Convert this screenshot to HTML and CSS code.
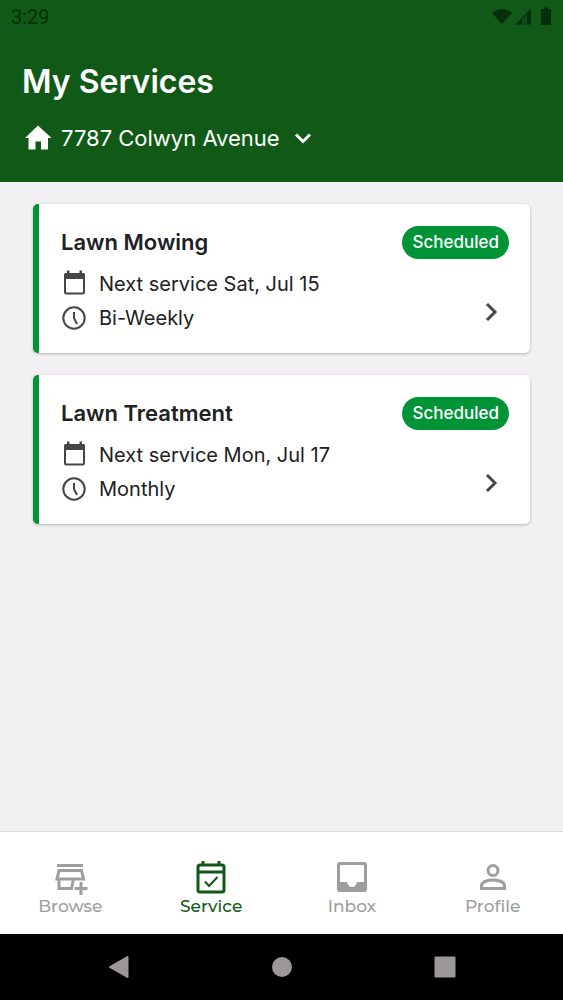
FILE: index.html
```html
<!DOCTYPE html>
<html lang="en">
<head>
<meta charset="utf-8">
<meta name="viewport" content="width=device-width, initial-scale=1">
<title>My Services</title>
<link rel="stylesheet" href="styles.css">
</head>
<body>
<div class="app">
  <header class="header">
    <div class="status">
      <time class="clock">3:29</time>
      <svg class="status-icons" viewBox="0 0 64 24" aria-hidden="true">
        <path d="M3 8Q13 0 23 8L13 19Z"/>
        <path d="M26 19.500L42 3.500V19.500H38V9L33 14V19.500Z"/>
        <path d="M38 9V19.500H33V14Z" opacity=".35"/>
        <path d="M52 4H55V2.500H59V4H62V20H52Z"/>
      </svg>
    </div>
    <h1 class="title">My Services</h1>
    <button class="address" type="button">
      <svg class="home" viewBox="0 0 28 28" aria-hidden="true"><path d="M14 1.500L27.500 14H24V25.500H17V17.500H11.500V25.500H4.500V14H1Z"/></svg>
      <span>7787 Colwyn Avenue</span>
      <svg class="caret" viewBox="0 0 20 20" aria-hidden="true"><path d="M3 6.500L10 13.500L17 6.500"/></svg>
    </button>
  </header>

  <main class="services">
    <article class="card">
      <div class="card-head">
        <h2 class="card-title">Lawn Mowing</h2>
        <span class="badge">Scheduled</span>
      </div>
      <div class="card-body">
        <ul class="details">
          <li class="detail">
            <svg class="detail-icon" viewBox="0 0 28 28" aria-hidden="true"><rect x="5" y="4" width="19" height="19.500" rx="1.500" class="line"/><path d="M4 9V5Q4 3 6 3H7V0.500H9.500V3H19.500V0.500H22V3H23Q25 3 25 5V9Z" class="solid"/></svg>
            <span>Next service Sat, Jul 15</span>
          </li>
          <li class="detail">
            <svg class="detail-icon" viewBox="0 0 28 28" aria-hidden="true"><circle cx="14" cy="14" r="10.700" class="line"/><path d="M14 8V14L17 20" class="line"/></svg>
            <span>Bi-Weekly</span>
          </li>
        </ul>
        <button class="open" type="button" aria-label="Open Lawn Mowing">
          <svg class="chevron" viewBox="0 0 24 24" aria-hidden="true"><path d="M8 4L16 12L8 20"/></svg>
        </button>
      </div>
    </article>

    <article class="card">
      <div class="card-head">
        <h2 class="card-title">Lawn Treatment</h2>
        <span class="badge">Scheduled</span>
      </div>
      <div class="card-body">
        <ul class="details">
          <li class="detail">
            <svg class="detail-icon" viewBox="0 0 28 28" aria-hidden="true"><rect x="5" y="4" width="19" height="19.500" rx="1.500" class="line"/><path d="M4 9V5Q4 3 6 3H7V0.500H9.500V3H19.500V0.500H22V3H23Q25 3 25 5V9Z" class="solid"/></svg>
            <span>Next service Mon, Jul 17</span>
          </li>
          <li class="detail">
            <svg class="detail-icon" viewBox="0 0 28 28" aria-hidden="true"><circle cx="14" cy="14" r="10.700" class="line"/><path d="M14 8V14L17 20" class="line"/></svg>
            <span>Monthly</span>
          </li>
        </ul>
        <button class="open" type="button" aria-label="Open Lawn Treatment">
          <svg class="chevron" viewBox="0 0 24 24" aria-hidden="true"><path d="M8 4L16 12L8 20"/></svg>
        </button>
      </div>
    </article>
  </main>

  <nav class="tabs">
    <a class="tab" href="#browse">
      <svg class="tab-icon" viewBox="0 0 36 36" aria-hidden="true"><path d="M5 6.500H31M7 11.500H29.500L31.500 20H5ZM7 20V29.500H19.500L21.500 20M29 23V36M22.500 29.500H35.500"/></svg>
      <span>Browse</span>
    </a>
    <a class="tab active" href="#service" aria-current="page">
      <svg class="tab-icon" viewBox="0 0 36 36" aria-hidden="true"><rect x="5" y="6" width="26" height="27" rx="2"/><path d="M5 13H31M10 6V2M26 6V2"/><path d="M12 22.500L16 27L24.500 18" class="tick"/></svg>
      <span>Service</span>
    </a>
    <a class="tab" href="#inbox">
      <svg class="tab-icon" viewBox="0 0 36 36" aria-hidden="true"><path fill-rule="evenodd" class="fill" d="M6 3H30Q33 3 33 6V30Q33 33 30 33H6Q3 33 3 30V6Q3 3 6 3ZM6 6V23H13Q14 28 18 28T23 23H30V6Z"/></svg>
      <span>Inbox</span>
    </a>
    <a class="tab" href="#profile">
      <svg class="tab-icon" viewBox="0 0 36 36" aria-hidden="true"><circle cx="18" cy="11.500" r="5"/><path d="M6.500 29.500V26.500C6.500 22.500 14 21 18 21S29.500 22.500 29.500 26.500V29.500Z"/></svg>
      <span>Profile</span>
    </a>
  </nav>

  <div class="system">
    <button class="key" type="button" aria-label="Back"><svg class="key-icon" viewBox="0 0 24 24" aria-hidden="true"><path d="M20.500 2V22L3 12Z"/></svg></button>
    <button class="key" type="button" aria-label="Home"><svg class="key-icon" viewBox="0 0 24 24" aria-hidden="true"><circle cx="12" cy="12" r="9"/></svg></button>
    <button class="key" type="button" aria-label="Recent apps"><svg class="key-icon" viewBox="0 0 24 24" aria-hidden="true"><rect x="2.500" y="2.500" width="19" height="19"/></svg></button>
  </div>
</div>
</body>
</html>
```
FILE: styles.css
```css
* {
  box-sizing: border-box;
}

body {
  margin: 0;
  font-family: Inter, "Liberation Sans", sans-serif;
  color: #202124;
}

button {
  padding: 0;
  border: 0;
  background: none;
  color: inherit;
  font: inherit;
  cursor: pointer;
}

svg {
  display: block;
  flex: none;
}

.app {
  display: flex;
  flex-direction: column;
  min-height: 100vh;
  background: #f2f0f3;
}

.header {
  padding: 0 22px 30px;
  background: #105917;
  color: #fff;
}

.status {
  display: flex;
  justify-content: space-between;
  align-items: center;
  height: 34px;
  margin: 0 -12px 0 -11px;
  color: #05300b;
}

.clock {
  font: 20px/24px Roboto, sans-serif;
}

.status-icons {
  width: 64px;
  height: 24px;
  fill: currentColor;
}

.title {
  margin: 26px 0 20px;
  font-size: 32px;
  line-height: 44px;
  font-weight: 600;
}

.address {
  display: flex;
  align-items: center;
  gap: 9px;
  margin-left: 2px;
  font-size: 22px;
  line-height: 28px;
}

.home {
  width: 28px;
  height: 28px;
  fill: currentColor;
}

.caret {
  width: 20px;
  height: 20px;
  margin-left: 4px;
  fill: none;
  stroke: currentColor;
  stroke-width: 3;
}

.services {
  display: flex;
  flex: 1;
  flex-direction: column;
  gap: 22px;
  padding: 22px 33px;
}

.card {
  padding: 22px 21px 18px 22px;
  border-left: 6px solid #019437;
  border-radius: 5px;
  background: #fff;
  box-shadow: 0 1px 3px rgb(0 0 0 / 25%);
}

.card-head,
.card-body {
  display: flex;
  justify-content: space-between;
  align-items: center;
}

.card-head {
  margin-bottom: 8px;
}

.card-title {
  margin: 0;
  font-size: 22px;
  line-height: 33px;
  font-weight: 600;
}

.badge {
  padding: 0 10px;
  border-radius: 17px;
  background: #019437;
  color: #fff;
  font-size: 17px;
  line-height: 33px;
  font-weight: 500;
}

.details {
  margin: 0 0 0 -1px;
  padding: 0;
  list-style: none;
}

.detail {
  display: flex;
  align-items: center;
  gap: 11px;
  font-size: 20px;
  line-height: 34px;
}

.detail-icon {
  width: 28px;
  height: 28px;
  fill: none;
  stroke: #444746;
  stroke-width: 2;
}

.detail-icon .solid {
  fill: #444746;
  stroke: none;
}

.open {
  align-self: flex-start;
  padding: 33px 6px 0 0;
}

.chevron {
  width: 24px;
  height: 24px;
  fill: none;
  stroke: #444746;
  stroke-width: 3;
}

.tabs {
  display: grid;
  grid-template-columns: repeat(4, 1fr);
  padding: 27px 0 17px;
  border-top: 1px solid #dcdcdc;
  background: #fff;
}

.tab {
  display: flex;
  flex-direction: column;
  align-items: center;
  color: #9e9e9e;
  font-family: Montserrat, Inter, sans-serif;
  font-size: 17px;
  line-height: 22px;
  font-weight: 500;
  text-decoration: none;
}

.tab.active {
  color: #105917;
}

.tab-icon {
  width: 36px;
  height: 36px;
  fill: none;
  stroke: currentColor;
  stroke-width: 3;
}

.tab-icon .tick {
  stroke-width: 2;
}

.tab-icon .fill {
  fill: currentColor;
  stroke: none;
}

.system {
  display: flex;
  justify-content: space-around;
  align-items: center;
  height: 66px;
  padding: 0 37px;
  background: #000;
}

.key {
  color: #9b979b;
}

.key-icon {
  width: 24px;
  height: 24px;
  fill: currentColor;
  stroke: currentColor;
  stroke-width: 2;
  stroke-linejoin: round;
}
```
